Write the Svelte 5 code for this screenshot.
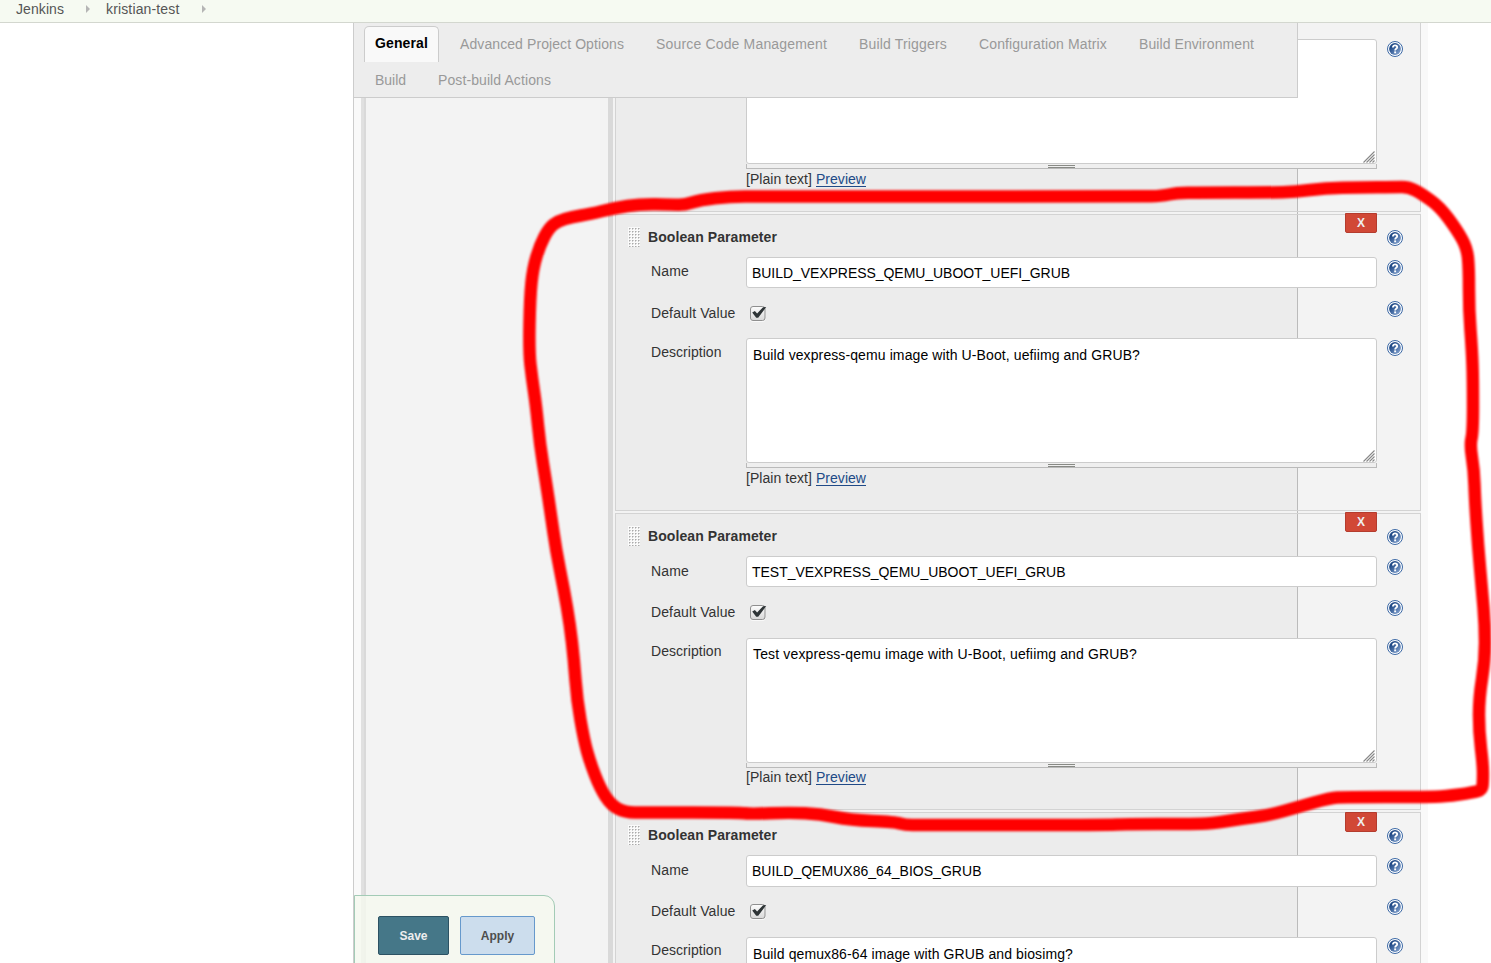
<script>
  const crumbs = [
    { text: 'Jenkins', w: 48 },
    { text: 'kristian-test', w: 73.5 },
  ];
  const tabs = [
    { text: 'General', w: 53, active: true },
    { text: 'Advanced Project Options', w: 164 },
    { text: 'Source Code Management', w: 171 },
    { text: 'Build Triggers', w: 88 },
    { text: 'Configuration Matrix', w: 128 },
    { text: 'Build Environment', w: 115 },
    { text: 'Build', w: 31 },
    { text: 'Post-build Actions', w: 113 },
  ];
  // The first entry is scrolled up, only the end of its description shows.
  const params = [
    { scrolled: true },
    {
      name: 'BUILD_VEXPRESS_QEMU_UBOOT_UEFI_GRUB', nameW: 318,
      desc: 'Build vexpress-qemu image with U-Boot, uefiimg and GRUB?', descW: 387,
    },
    {
      name: 'TEST_VEXPRESS_QEMU_UBOOT_UEFI_GRUB', nameW: 313.5,
      desc: 'Test vexpress-qemu image with U-Boot, uefiimg and GRUB?', descW: 384,
    },
    {
      name: 'BUILD_QEMUX86_64_BIOS_GRUB', nameW: 229.5,
      desc: 'Build qemux86-64 image with GRUB and biosimg?', descW: 320,
    },
  ];

  const stroke = [
    [540, 245], [549, 228], [558, 221], [572, 217], [590, 214], [615, 208], [640, 204], [672, 204.5], [684, 205],
    [700, 200], [730, 196.5], [760, 196.5], [1140, 196.5], [1162, 196], [1176, 193], [1200, 192.5], [1270, 192.5],
    [1295, 192], [1325, 188], [1360, 187.5], [1395, 187], [1409, 187], [1422, 194], [1440, 207], [1457, 230],
    [1467, 248], [1469, 268], [1469, 310], [1472, 350], [1473, 380], [1473, 432], [1470, 445], [1474, 470],
    [1475, 500], [1478, 545], [1482, 590], [1485, 625], [1485, 660], [1479, 698], [1479, 732], [1483, 765],
    [1483, 782], [1482, 790], [1473, 792.5], [1445, 796.5], [1425, 797], [1345, 797], [1330, 798], [1298, 807],
    [1270, 815], [1240, 819], [1212, 823.5], [1190, 824], [1125, 824], [1110, 825], [920, 825], [905, 825],
    [895, 822], [850, 820], [820, 814], [790, 812.5], [750, 814], [740, 812.5], [645, 812.5], [625, 812.5],
    [611, 805], [600, 788], [590, 762], [584, 740], [577, 700], [574, 660], [570, 625], [564, 590], [556, 550],
    [551, 515], [546, 482], [540, 445], [536, 405], [532, 378], [529, 352], [530, 297], [533, 268],
  ];
  // Closed curve through the midpoints, each point being a control point.
  const mid = (a, b) => `${(a[0] + b[0]) / 2} ${(a[1] + b[1]) / 2}`;
  const markerPath =
    `M${mid(stroke[stroke.length - 1], stroke[0])}` +
    stroke.map((p, i) => `Q${p[0]} ${p[1]} ${mid(p, stroke[(i + 1) % stroke.length])}`).join('') + 'Z';

  // Tracks the text so that it takes up the given width.
  function fit(node, width) {
    if (!width) return;
    const natural = node.getBoundingClientRect().width;
    node.style.letterSpacing = (width - natural) / node.textContent.length + 'px';
  }
</script>

{#snippet help()}
  <svg class="help" width="16" height="16" viewBox="0 0 16 16">
    <circle cx="8" cy="8" r="7.500" fill="#fff" stroke="#3b68a5" stroke-width="1" />
    <circle cx="8" cy="8" r="5.900" fill="url(#helpfill)" />
    <path d="M5.900 6.400C5.900 5 6.800 4.400 8 4.400s2.200.7 2.200 1.800c0 1.600-2.100 1.500-2.100 3.300" fill="none" stroke="#fff" stroke-width="1.800" />
    <rect x="7.200" y="10.400" width="1.900" height="1.900" fill="#fff" />
  </svg>
{/snippet}

<svg class="defs" width="0" height="0">
  <defs>
    <linearGradient id="helpfill" x1="0" y1="0" x2="1" y2="1">
      <stop offset="0.25" stop-color="#204a87" />
      <stop offset="1" stop-color="#8fadd8" />
    </linearGradient>
    <linearGradient id="boxfill" x1="0" y1="0" x2="0" y2="1">
      <stop offset="0" stop-color="#fdfdfd" />
      <stop offset="1" stop-color="#d8d8d8" />
    </linearGradient>
    <pattern id="dots" width="3" height="3" patternUnits="userSpaceOnUse">
      <rect width="3" height="3" fill="#fafafa" />
      <rect x="1" y="1" width="1" height="1" fill="#aaa" />
      <rect x="2" y="1" width="1" height="1" fill="#d0d0d0" />
      <rect x="1" y="2" width="1" height="1" fill="#d0d0d0" />
    </pattern>
  </defs>
</svg>

<div class="page">
  <header class="crumbs">
    {#each crumbs as c}
      <span class="crumb"><span use:fit={c.w}>{c.text}</span></span>
      <i class="arrow"></i>
    {/each}
  </header>

  <main>
    <div class="config">
      <div class="rail"></div>
      <div class="gutter"></div>
      <div class="rail two"></div>
      <div class="cards">
        {#each params as p}
          <section class="card" class:scrolled={p.scrolled}>
            {#if !p.scrolled}
              <button class="delete">X</button>
              <div class="row head">
                <svg class="drag" width="12" height="20"><rect width="12" height="20" fill="url(#dots)" /></svg>
                <b><span use:fit={129}>Boolean Parameter</span></b>
                {@render help()}
              </div>
              <div class="row name">
                <div class="label"><span use:fit={38}>Name</span></div>
                <div class="input"><span use:fit={p.nameW}>{p.name}</span></div>
                {@render help()}
              </div>
              <div class="row default">
                <div class="label"><span use:fit={84.5}>Default Value</span></div>
                <svg class="check" width="18" height="17" viewBox="0 0 18 17">
                  <rect x="0" y="2" width="15.500" height="15" rx="3" fill="#fff" opacity=".7" />
                  <rect x=".5" y="1.500" width="14.500" height="14" rx="2.500" fill="url(#boxfill)" stroke="#8f8f8f" />
                  <path d="M2.200 7.500 4.900 5.900 7.100 8.600 13 2.300 16.200 2.100 8.200 12.700 6.200 12.700Z" fill="#2e3436" />
                </svg>
                {@render help()}
              </div>
            {/if}
            <div class="row desc">
              <div class="label">{#if !p.scrolled}<span use:fit={70.5}>Description</span>{/if}</div>
              <div class="field">
                <div class="area">
                  {#if p.desc}<span use:fit={p.descW}>{p.desc}</span>{/if}
                  <svg class="resize" width="12" height="12" viewBox="0 0 12 12">
                    <path d="M.5 11.500 11.500.5M3.500 11.500l8-8M6.500 11.500l5-5M9.500 11.500l2-2" stroke="#888" stroke-width="1.100" />
                  </svg>
                </div>
                <div class="grip"><i></i></div>
                <div class="format"><span use:fit={66}>[Plain text]</span><a href="#preview"><span use:fit={50}>Preview</span></a></div>
              </div>
              {@render help()}
            </div>
          </section>
        {/each}
      </div>
    </div>

    <nav class="tabs">
      {#each tabs as t}
        <span class="tab" class:active={t.active}><span use:fit={t.w}>{t.text}</span></span>
      {/each}
    </nav>

    <div class="actions">
      <button class="save">Save</button>
      <button class="apply">Apply</button>
    </div>
  </main>

  <svg class="marker" width="1491" height="963" viewBox="0 0 1491 963">
    <path d={markerPath} />
  </svg>
</div>

<style>
  :global(body) { margin: 0; background: #fff; }
  .page {
    position: relative; width: 1491px; height: 963px; overflow: hidden;
    display: flex; flex-direction: column;
    font: 14px/16px "Liberation Sans", Arial, sans-serif; color: #333;
  }
  .page span { white-space: nowrap; }
  .defs { position: absolute; }
  .crumbs {
    flex: none; height: 22px; display: flex; padding-left: 16px;
    background: #f6faf2; border-bottom: 1px solid #d3d7cf;
  }
  .crumb { margin-top: 1px; color: #555; }
  .arrow {
    width: 0; height: 0; margin: 5px 16px 0 22px;
    border: 4px solid transparent; border-left: 4px solid #b5b5b5; border-right: 0;
  }
  main { position: relative; flex: 1; display: flex; min-height: 0; padding-left: 353px; overflow: hidden; }
  .config {
    display: flex; width: 1075px; height: 940px; box-sizing: border-box;
    border-left: 1px solid #ccc; background: #f9f9f9; padding: 0 7px;
  }
  .rail { flex: none; width: 5px; background: linear-gradient(to right, #e0e0e0 3px, #d9d9d9 3px); }
  .rail.two { background: #d9d9d9; }
  .gutter { flex: none; width: 242px; background: #f3f3f3; }
  .cards {
    flex: 1; display: flex; flex-direction: column; gap: 2.100px; padding-left: 2px; overflow: hidden;
    background: linear-gradient(to right, #f3f3f3 684px, #bbb 684px, #bbb 685px, #f3f3f3 685px);
  }
  .card {
    position: relative; flex: none; height: 297.200px; width: 806px; box-sizing: border-box;
    border: 1px solid #d3d3d3;
    background: linear-gradient(to right, #ececec 681px, #bbb 681px, #bbb 682px, #f3f3f3 682px);
  }
  .card.scrolled { height: 188.700px; border-top: 0; padding-top: 16px; }
  .row { display: flex; align-items: flex-start; padding-left: 35px; }
  .label { width: 95px; flex: none; box-sizing: border-box; }
  .help { flex: none; margin-left: 10px; display: block; }
  .head { height: 41.900px; box-sizing: border-box; padding: 12px 0 0 12px; }
  .head b { margin: 2px 0 0 8px; width: 729px; }
  .head .help { margin: 3px 0 0 10px; }
  .drag { flex: none; display: block; }
  .name { height: 40.800px; }
  .name .label { padding-top: 6.600px; }
  .name .help { margin-top: 3px; }
  .input {
    width: 631px; height: 31.500px; box-sizing: border-box; padding: 7px 5px;
    border: 1px solid #ccc; border-radius: 3px; background: #fff; color: #000;
  }
  .default { height: 40.800px; }
  .default .label { padding-top: 7.300px; }
  .check { flex: none; display: block; margin: 7.300px 609px 0 4px; }
  .default .help { margin-top: 3.450px; }
  .desc .label { padding-top: 5.300px; }
  .desc .help { margin-top: 1.600px; }
  .field { width: 631px; }
  .area {
    position: relative; height: 125px; box-sizing: border-box; padding: 7.800px 6px;
    border: 1px solid #ccc; border-radius: 3px; background: #fff; color: #000;
  }
  .resize { position: absolute; right: 1px; bottom: 0; }
  .grip {
    height: 5px; box-sizing: border-box; border: 1px solid #bababa; border-top: 0; background: #efefef;
    display: flex; justify-content: center;
  }
  .grip i { width: 27px; height: 1px; margin-top: 1px; border-top: 1px solid #888a85; border-bottom: 1px solid #888a85; }
  .format { display: flex; gap: 4px; margin-top: 1.800px; }
  .format a { color: #204a87; text-decoration: none; border-bottom: 1px solid #204a87; height: 15px; }
  .delete {
    position: absolute; right: 43px; top: -1.700px; width: 32px; height: 20px; padding: 0;
    border: 1px solid #b43c2e; border-radius: 0 0 2px 2px; background: #d14836; color: #eee;
    font: bold 12px "Liberation Sans", Arial, sans-serif;
  }
  .tabs {
    position: absolute; left: 353px; top: 0; width: 945px; height: 75px; box-sizing: border-box;
    display: flex; flex-wrap: wrap; align-content: flex-start; padding: 3px 0 0 10px;
    background: #ededed; border: 1px solid #ccc; border-top: 0; color: #999;
  }
  .tab { height: 36px; box-sizing: border-box; padding: 10px 11px 0; margin-right: 10px; }
  .tab.active {
    padding: 8px 10px 0; border: 1px solid #ccc; border-bottom: 0; border-radius: 5px 5px 0 0;
    background: #f9f9f9; color: #000; font-weight: bold;
  }
  .actions {
    position: absolute; left: 354px; top: 872px; width: 201px; height: 80px; box-sizing: border-box;
    display: flex; gap: 11px; padding: 20px 0 0 23px;
    border: 1px solid #a3cbb6; border-radius: 0 11px 0 0; background: rgba(245, 249, 239, .8);
  }
  .actions button {
    height: 39px; padding: 0; border-radius: 2px;
    font: bold 12px "Liberation Sans", Arial, sans-serif;
  }
  .save { width: 71px; background: #457788; border: 1px solid #2c5263; color: #eee; }
  .apply { width: 75px; background: #ccdded; border: 1px solid #6699cc; color: #4d4d4d; }
  .marker { position: absolute; left: 0; top: 0; pointer-events: none; }
  .marker path { fill: none; stroke: #f00; stroke-width: 12.500; stroke-linejoin: round; filter: blur(.9px); }
</style>
